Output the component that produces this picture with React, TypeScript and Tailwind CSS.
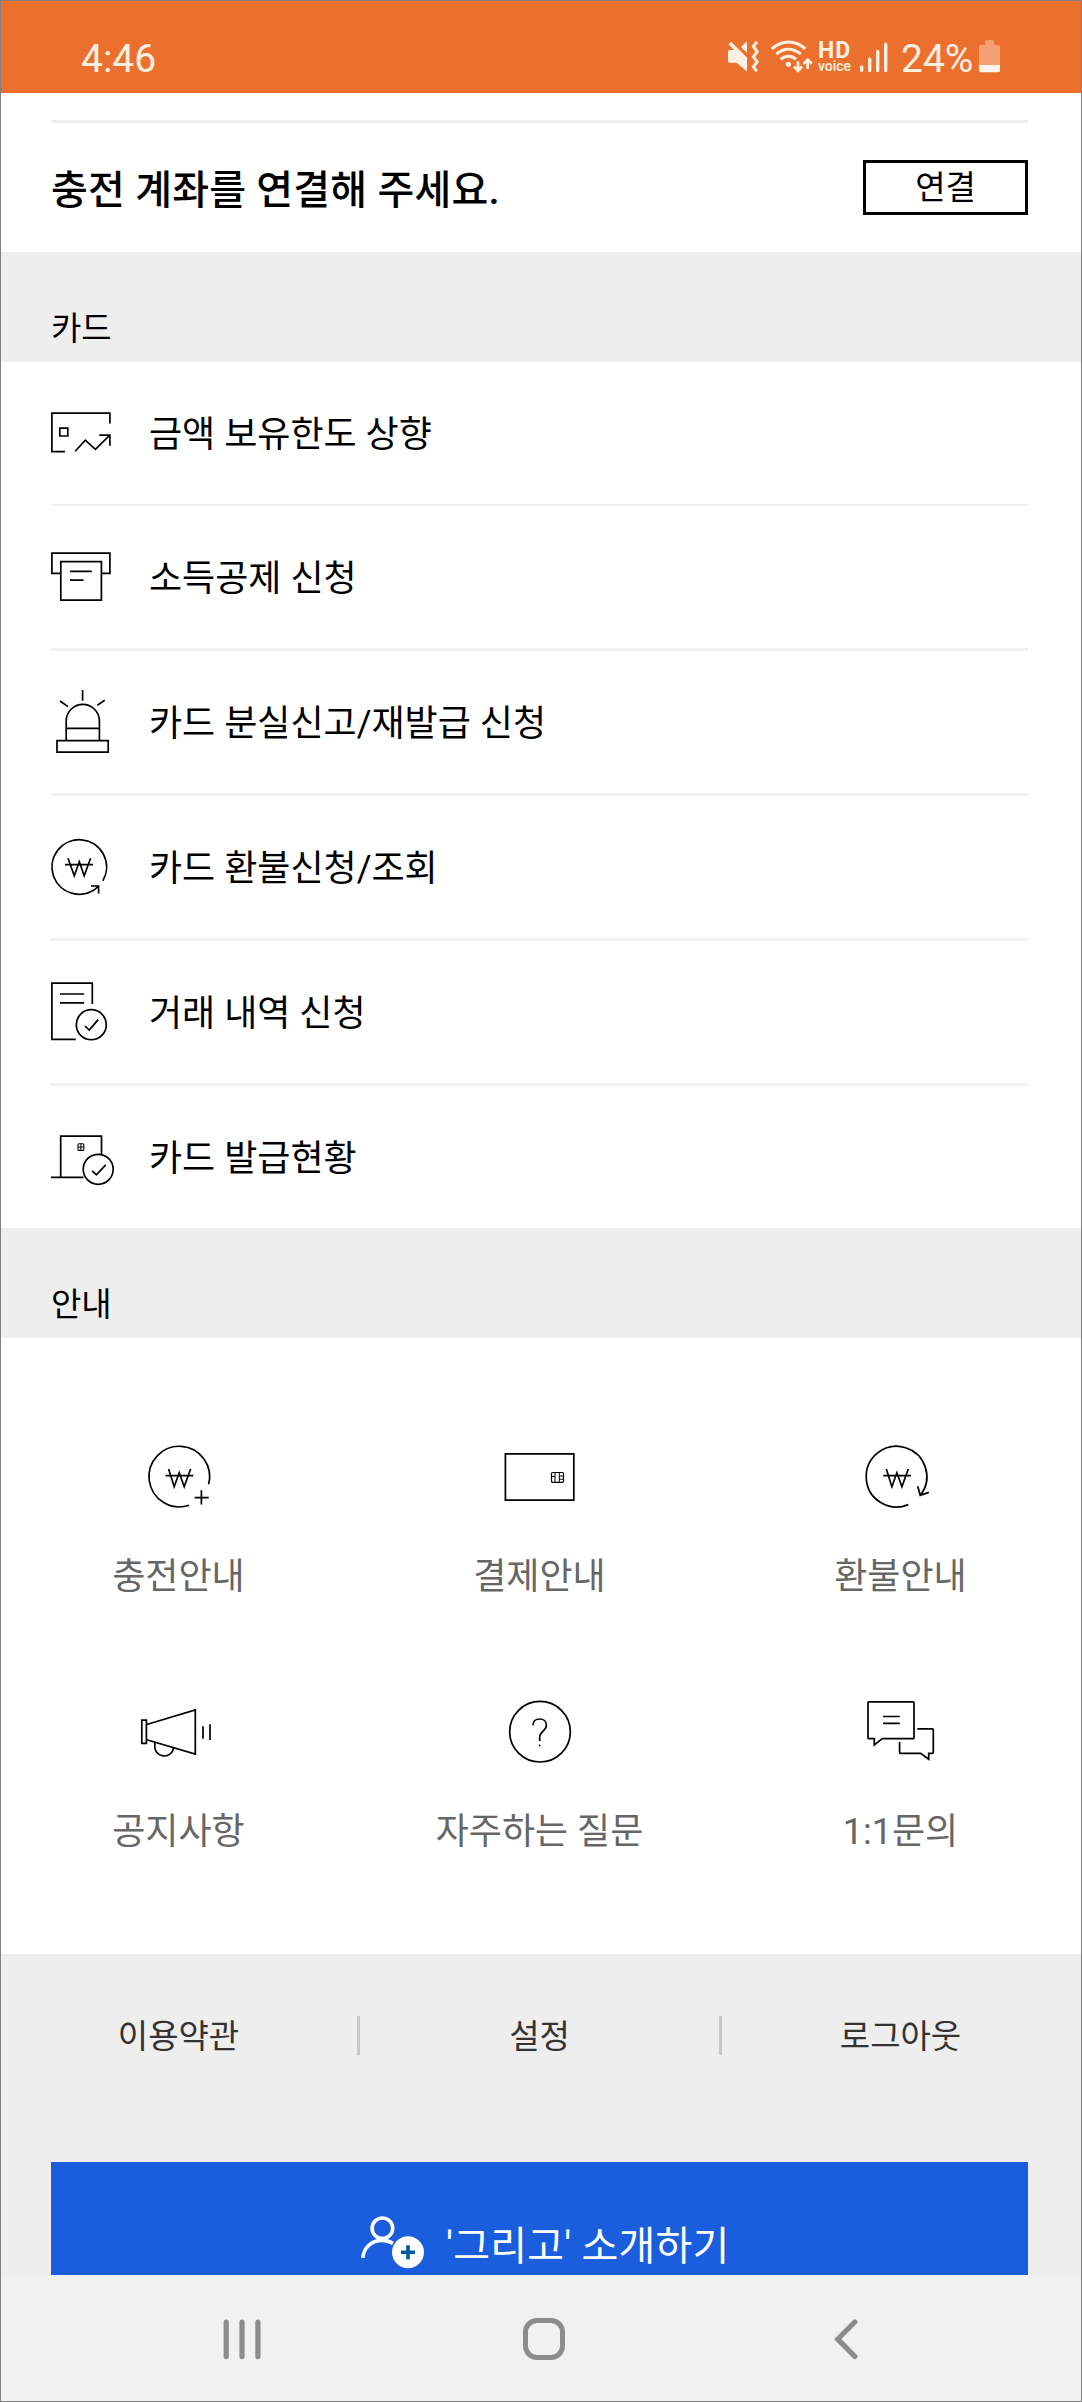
import type { ReactNode } from 'react'

type IconProps = { children: ReactNode }

const RowIcon = ({ children }: IconProps) => (
  <svg className="w-[66px] h-[70px] shrink-0 overflow-visible" viewBox="0 0 66 70" fill="none" stroke="#000" strokeWidth="1.7">
    {children}
  </svg>
)

const GuideIcon = ({ children }: IconProps) => (
  <svg className="w-[73px] h-16 overflow-visible" viewBox="0 0 73 64" fill="none" stroke="#000" strokeWidth="1.7">
    {children}
  </svg>
)

const Won = ({ x }: { x: number }) => (
  <path d="M0 6.7h27.7M3 0l5.6 17.7 5-14 5 14L25 0" transform={`translate(${x} 24)`} />
)

const cardMenu = [
  {
    label: '금액 보유한도 상향',
    icon: (
      <RowIcon>
        <path d="M14 53.6H.9V15.1h58V25.5" />
        <path d="M8.8 30.1h8v7.9h-8zM24.2 53.2 34.3 42.2l10.1 9.2L58.8 37.2M48.3 37.2h10.6v10.6" />
      </RowIcon>
    ),
  },
  {
    label: '소득공제 신청',
    icon: (
      <RowIcon>
        <path d="M9 31.4H.9V11.1h58v20.3H51" />
        <path d="M9.8 19.7h40.6v38.4H9.8zM19 29.3h21.8M19 38.2h13.6" />
      </RowIcon>
    ),
  },
  {
    label: '카드 분실신고/재발급 신청',
    icon: (
      <RowIcon>
        <path d="M31.6 3v10.7M9 14l8 5.6M53.7 13.3l-7.3 5" />
        <path d="M15.2 53.5V34a16.6 16.6 0 0 1 33.2 0v19.5M15.2 41.4h33.2M6 53.7h51.2v11.4H6z" />
      </RowIcon>
    ),
  },
  {
    label: '카드 환불신청/조회',
    icon: (
      <RowIcon>
        <path d="M51.9 48.7A27.3 27.3 0 1 0 47.7 54.2M40 54h7.6v7.6" />
        <path d="M14 32.7h28M17 26.3 23.3 43.7l5-14 4.9 14 6.4-17.4" />
      </RowIcon>
    ),
  },
  {
    label: '거래 내역 신청',
    icon: (
      <RowIcon>
        <path d="M24.8 62.4H.9V6.1h40.4V27M9 17h24.2M9 25.8h24.2" />
        <circle cx="40.3" cy="47.7" r="15" />
        <path d="m34 49 4.2 4 9-10.4" />
      </RowIcon>
    ),
  },
  {
    label: '카드 발급현황',
    icon: (
      <RowIcon>
        <path d="M0 55.4h32.5M9.7 55V14.2h40.8v18" />
        <circle cx="47.2" cy="47.3" r="15" />
        <path d="m41.1 48.8 4.3 4 9.3-10" />
        <rect x="27" y="21.8" width="5.8" height="6.6" rx="1" strokeWidth="1.1" />
        <path d="M27 25h5.8M29.9 22v6.4" strokeWidth="1" />
      </RowIcon>
    ),
  },
]

const guideMenu = [
  {
    label: '충전안내',
    icon: (
      <GuideIcon>
        <path d="M66.6 39.4A30.3 30.3 0 1 0 47 60.3M52.7 52.6h14M59.4 45.3v14.3" />
        <Won x={23.6} />
      </GuideIcon>
    ),
  },
  {
    label: '결제안내',
    icon: (
      <GuideIcon>
        <path d="M2.4 8.8h68.4v46.4H2.4z" />
        <rect x="48.5" y="27.5" width="12" height="9.8" rx="1" strokeWidth="1.2" />
        <path d="M52 27.5v9.8M56.3 27.5v9.8M48.5 31.5H52M56.3 31h4.2M56.3 34.2h4.2" strokeWidth="1" />
      </GuideIcon>
    ),
  },
  {
    label: '환불안내',
    icon: (
      <GuideIcon>
        <path d="M44.3 59.6A30.3 30.3 0 1 1 56.5 50.2M53.7 41.3l2.5 9 8.7-2.9" />
        <Won x={19.3} />
      </GuideIcon>
    ),
  },
  {
    label: '공지사항',
    icon: (
      <GuideIcon>
        <path d="M-.2 20.2h4.6v23.2H-.2zM4.7 24.5 53.3 10v44L4.7 39.7" />
        <path d="M12.8 42v3.2a9.4 9.4 0 0 0 18.8 2.6M61 26.3v12.4M68 24.3V40" />
      </GuideIcon>
    ),
  },
  {
    label: '자주하는 질문',
    icon: (
      <GuideIcon>
        <circle cx="37" cy="31.7" r="30.3" />
        <path d="M30 25.2c0-3.8 2.7-6.2 6.6-6.2s6.8 2.5 6.8 6.3c0 5.4-6.7 6.3-6.7 11.7v4" />
        <circle cx="36.6" cy="45.5" r=".9" fill="#000" stroke="none" />
      </GuideIcon>
    ),
  },
  {
    label: '1:1문의',
    icon: (
      <GuideIcon>
        <path d="M5 1.8h44q1 0 1 1v34.9q0 1-1 1H18.3l-8 6.3v-6.3H5q-1 0-1-1V2.8q0-1 1-1zM19 16.5h16.8M19 23.4h16.8" />
        <path d="M53.3 28.8h15q1 0 1 1v22.5q0 1-1 1h-3.6v6l-8-6H36.6q-1 0-1-1V42" />
      </GuideIcon>
    ),
  },
]

const footerLinks = ['이용약관', '설정', '로그아웃']

function StatusBar() {
  return (
    <header className="flex h-[93px] shrink-0 items-start bg-[#ec702d] pl-[81px] pt-10 text-[#fff0e2]">
      <span className="w-[645px] pt-px font-['Roboto',sans-serif] text-[39px] leading-[36px]">4:46</span>
      <svg className="w-[34px] h-[33px] shrink-0" viewBox="0 0 34 33" fill="currentColor">
        <path d="M2 12a2 2 0 0 1 2-2h4L2.6 4.2 5 1.8 21 17.5v14L10.5 22.7H4a2 2 0 0 1-2-2zM21 1.3v11.4L14.8 7z" />
        <path d="m31 1.8-3.6 4.6 3.8 5.4-3.8 5 3.8 5-3.8 5 3.4 4.6" fill="none" stroke="currentColor" strokeWidth="3" />
      </svg>
      <svg className="ml-2.5 w-[43px] h-[33px] shrink-0" viewBox="0 0 43 33" fill="none" stroke="currentColor" strokeWidth="3">
        <path d="M1.7 8.9Q9.5 2 18.5 2T35.5 8.9M6.3 14.2Q12 9.3 18.5 9.3T30.8 14.2M10.7 19.3q3.4-3 7.8-3t7.6 3" />
        <circle cx="18.4" cy="24.3" r="2.6" fill="currentColor" stroke="none" />
        <path d="M28 21.3v9M24 26.5l4 4.2 4-4.2M37.7 29v-9M33.6 23.8l4.1-4.2 4.1 4.2" strokeWidth="2.7" />
      </svg>
      <div className="ml-[5px] flex w-[33px] shrink-0 flex-col items-center font-['Roboto',sans-serif]">
        <span className="mt-0.5 text-[23px] font-bold leading-[18px] tracking-[0.8px]">HD</span>
        <span className="text-[14px] font-medium leading-[13px]">voice</span>
      </div>
      <svg className="ml-2 w-[30px] h-[33px] shrink-0" viewBox="0 0 30 33" stroke="currentColor" strokeWidth="3.4" strokeLinecap="round">
        <path d="M2.7 27v3.4M10.7 19.2v11.2M18.7 11.4v19M26.7 4.2v26.2" />
      </svg>
      <span className="ml-[12px] w-[75px] pt-px font-['Roboto',sans-serif] text-[39px] leading-[36px]">24%</span>
      <svg className="ml-[3px] w-[21px] h-[33px] shrink-0" viewBox="0 0 21 33">
        <path d="M6 2q0-2 2-2h5q2 0 2 2v3h4q2 0 2 2v18H0V7q0-2 2-2h4z" fill="#f4a074" />
        <path d="M0 25h21v5.3q0 2-2 2H2q-2 0-2-2z" fill="#fff3e9" />
      </svg>
    </header>
  )
}

function SectionTitle({ children }: { children: ReactNode }) {
  return (
    <h2 className="h-[110px] shrink-0 bg-[#eee] pl-[51px] pt-[53px] text-[33px] leading-[48px]">{children}</h2>
  )
}

function NavBar() {
  return (
    <nav className="flex h-[127px] shrink-0 items-center bg-[#f1f1f1] pl-[223px] text-[#8c8c8c]">
      <svg className="w-[38px] h-[42px]" viewBox="0 0 38 42" stroke="currentColor" strokeWidth="5.2" strokeLinecap="round">
        <path d="M3.2 4v34.6M19 4v34.6M34.9 4v34.6" />
      </svg>
      <div className="ml-[262px] size-[42px] rounded-[14px] border-[5px] border-current" />
      <svg className="ml-[268px] w-[26px] h-[42px]" viewBox="0 0 26 42" fill="none" stroke="currentColor" strokeWidth="5.2" strokeLinecap="round">
        <path d="M21.8 4 4.7 21.2l17.1 17.2" />
      </svg>
    </nav>
  )
}

export default function App() {
  return (
    <div className="relative flex h-[2402px] w-[1082px] flex-col overflow-hidden bg-white font-['Roboto','Noto_Sans_CJK_KR',sans-serif] text-black">
      <StatusBar />

      <section className="h-[159px] shrink-0 pl-[51px] pr-[54px] pt-[27px]">
        <div className="flex items-start justify-between border-t-[3px] border-[#eee] pt-[37px]">
          <h1 className="pt-0.5 text-[40px] font-medium leading-[58px] tracking-[0.2px]">충전 계좌를 연결해 주세요.</h1>
          <button className="h-[55px] w-[165px] border-[3px] border-black text-[33px] leading-[48px]">연결</button>
        </div>
      </section>

      <SectionTitle>카드</SectionTitle>
      <ul className="h-[866px] shrink-0 pl-[51px] pr-[54px]">
        {cardMenu.map(({ label, icon }) => (
          <li
            key={label}
            className="flex h-[145px] items-center gap-[32px] border-b-[3px] border-[#f1f1f1] first:h-36 first:border-b-2 last:h-[142px] last:border-b-0"
          >
            {icon}
            <span className="pt-1 text-[36px] leading-[52px]">{label}</span>
          </li>
        ))}
      </ul>

      <SectionTitle>안내</SectionTitle>
      <div className="grid h-[616px] shrink-0 auto-rows-[255px] grid-cols-[357px_365px_357px] pt-[107px] text-[#666]">
        {guideMenu.map(({ label, icon }) => (
          <div key={label} className="flex flex-col items-center">
            {icon}
            <span className="mt-[42px] text-[36px] leading-[52px]">{label}</span>
          </div>
        ))}
      </div>

      <footer className="h-[321px] shrink-0 overflow-hidden bg-[#eee] pt-[62px]">
        <div className="grid grid-cols-[360px_362px_357px]">
          {footerLinks.map((link) => (
            <a key={link} className="h-[39px] border-r-[3px] border-[#c8c8c8] text-center text-[33px] leading-[41px] text-[#333] last:border-r-0">
              {link}
            </a>
          ))}
        </div>
        <button className="ml-[51px] mt-[107px] flex h-[168px] w-[977px] bg-[#1a5ddd] pl-[310px] pt-[54px] text-[40px] text-white">
          <svg className="mr-[21px] w-16 h-[53px]" viewBox="0 0 64 53" fill="none" stroke="currentColor" strokeWidth="3.6">
            <circle cx="21.4" cy="12.3" r="10.3" />
            <path d="M1.9 41.8C2.7 31.5 10.6 24.4 21 24.4q6 0 11 3" />
            <circle cx="47" cy="36.3" r="16" fill="currentColor" stroke="none" />
            <path d="M40 36.3h14M47 29.3v14" stroke="#005a9e" />
          </svg>
          <span className="pt-0.5 leading-[58px] tracking-[0.2px]">'그리고' 소개하기</span>
        </button>
      </footer>

      <NavBar />
      <div className="pointer-events-none absolute inset-0 border border-[#808080]" />
    </div>
  )
}
